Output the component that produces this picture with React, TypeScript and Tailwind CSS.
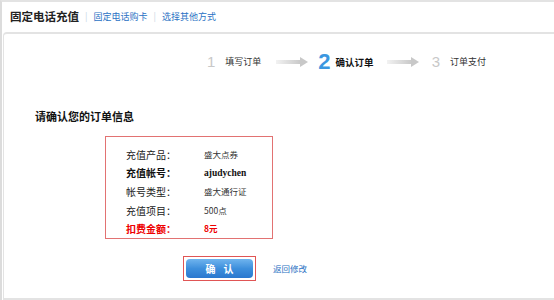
import React from "react";

const cjk = "font-['SimSun','Noto_Sans_CJK_SC',sans-serif]";

// light gray step arrow
const StepArrow = () => (
  <svg width="32" height="10" viewBox="0 0 32 10">
    <defs>
      <linearGradient id="ag" x1="0" x2="1" y1="0" y2="0">
        <stop offset="0" stopColor="#f2f2f2" />
        <stop offset="1" stopColor="#c8c8c8" />
      </linearGradient>
    </defs>
    <rect x="0" y="3" width="25" height="4" fill="url(#ag)" />
    <polygon points="24,0 32,5 24,10" fill="#c8c8c8" />
  </svg>
);

const rows = [
  { label: "充值产品：", value: "盛大点券", kind: "normal" },
  { label: "充值帐号：", value: "ajudychen", kind: "bold" },
  { label: "帐号类型：", value: "盛大通行证", kind: "normal" },
  { label: "充值项目：", value: "500点", kind: "normal" },
  { label: "扣费金额：", value: "8元", kind: "red" },
];

export default function App() {
  return (
    <div className={`w-[554px] h-[300px] bg-white flex flex-col border-t-2 border-[#e3e3e3] border-l-2 border-l-[#dcdcdc] overflow-hidden ${cjk}`}>
      {/* header tabs */}
      <div className="h-[30px] flex items-center pl-[8px] shrink-0">
        <span className="text-[11.5px] font-bold text-[#222]">固定电话充值</span>
        <span className="text-[9px] text-[#c9d6e4] mx-[6px]">|</span>
        <a className="text-[9px] text-[#2a72c4]">固定电话购卡</a>
        <span className="text-[9px] text-[#c9d6e4] mx-[6px]">|</span>
        <a className="text-[9px] text-[#2a72c4]">选择其他方式</a>
      </div>

      {/* panel */}
      <div className="flex-1 ml-[1px] border-t-2 border-l border-b-2 border-[#e3e3e3] rounded-tl-[4px] flex flex-col">
        {/* steps */}
        <div className="mt-[18px] h-[20px] flex items-center pl-[203px]">
          <span className="text-[15px] text-[#c8c8c8] font-['Liberation_Sans',sans-serif]">1</span>
          <span className="ml-[10px] text-[9px] text-[#333]">填写订单</span>
          <span className="ml-[15px] flex"><StepArrow /></span>
          <span className="ml-[10px] text-[22px] leading-none font-bold text-[#3b97e0] font-['Liberation_Sans',sans-serif]">2</span>
          <span className="ml-[5px] text-[9.5px] font-bold text-[#111]">确认订单</span>
          <span className="ml-[13px] flex"><StepArrow /></span>
          <span className="ml-[13px] text-[15px] text-[#c8c8c8] font-['Liberation_Sans',sans-serif]">3</span>
          <span className="ml-[10px] text-[9px] text-[#333]">订单支付</span>
        </div>

        {/* heading */}
        <div className="mt-[36px] pl-[31px] text-[11px] font-bold text-[#111] leading-[16px]">请确认您的订单信息</div>

        {/* order box */}
        <div className="mt-[12px] ml-[101px] w-[168px] h-[103px] border border-[#e27272] pt-[8px] flex flex-col">
          {rows.map((r) => (
            <div key={r.label} className="h-[18.6px] flex items-center">
              <span
                className={`w-[70px] text-right text-[10px] ${
                  r.kind === "bold" ? "font-bold text-[#111]" : r.kind === "red" ? "font-bold text-[#e00]" : "text-[#222]"
                }`}
              >
                {r.label}
              </span>
              <span
                className={`ml-[28px] text-[8.5px] ${
                  r.kind === "bold"
                    ? "font-bold text-[#111] text-[9.5px] font-['Liberation_Serif',serif]"
                    : r.kind === "red"
                    ? "font-bold text-[#e00]"
                    : "text-[#333]"
                }`}
              >
                {r.value}
              </span>
            </div>
          ))}
        </div>

        {/* actions */}
        <div className="mt-[17px] ml-[179px] flex items-center">
          <div className="w-[73px] h-[25px] border border-[#e05555] p-[2px] flex">
            <button className="flex-1 rounded-[4px] bg-gradient-to-b from-[#6fb4ee] via-[#3d8fdc] to-[#2a78cf] text-white text-[10px] font-bold tracking-[8px] pl-[8px] flex items-center justify-center">
              确认
            </button>
          </div>
          <a className="ml-[17px] text-[8.5px] text-[#2a72c4]">返回修改</a>
        </div>
      </div>
    </div>
  );
}
